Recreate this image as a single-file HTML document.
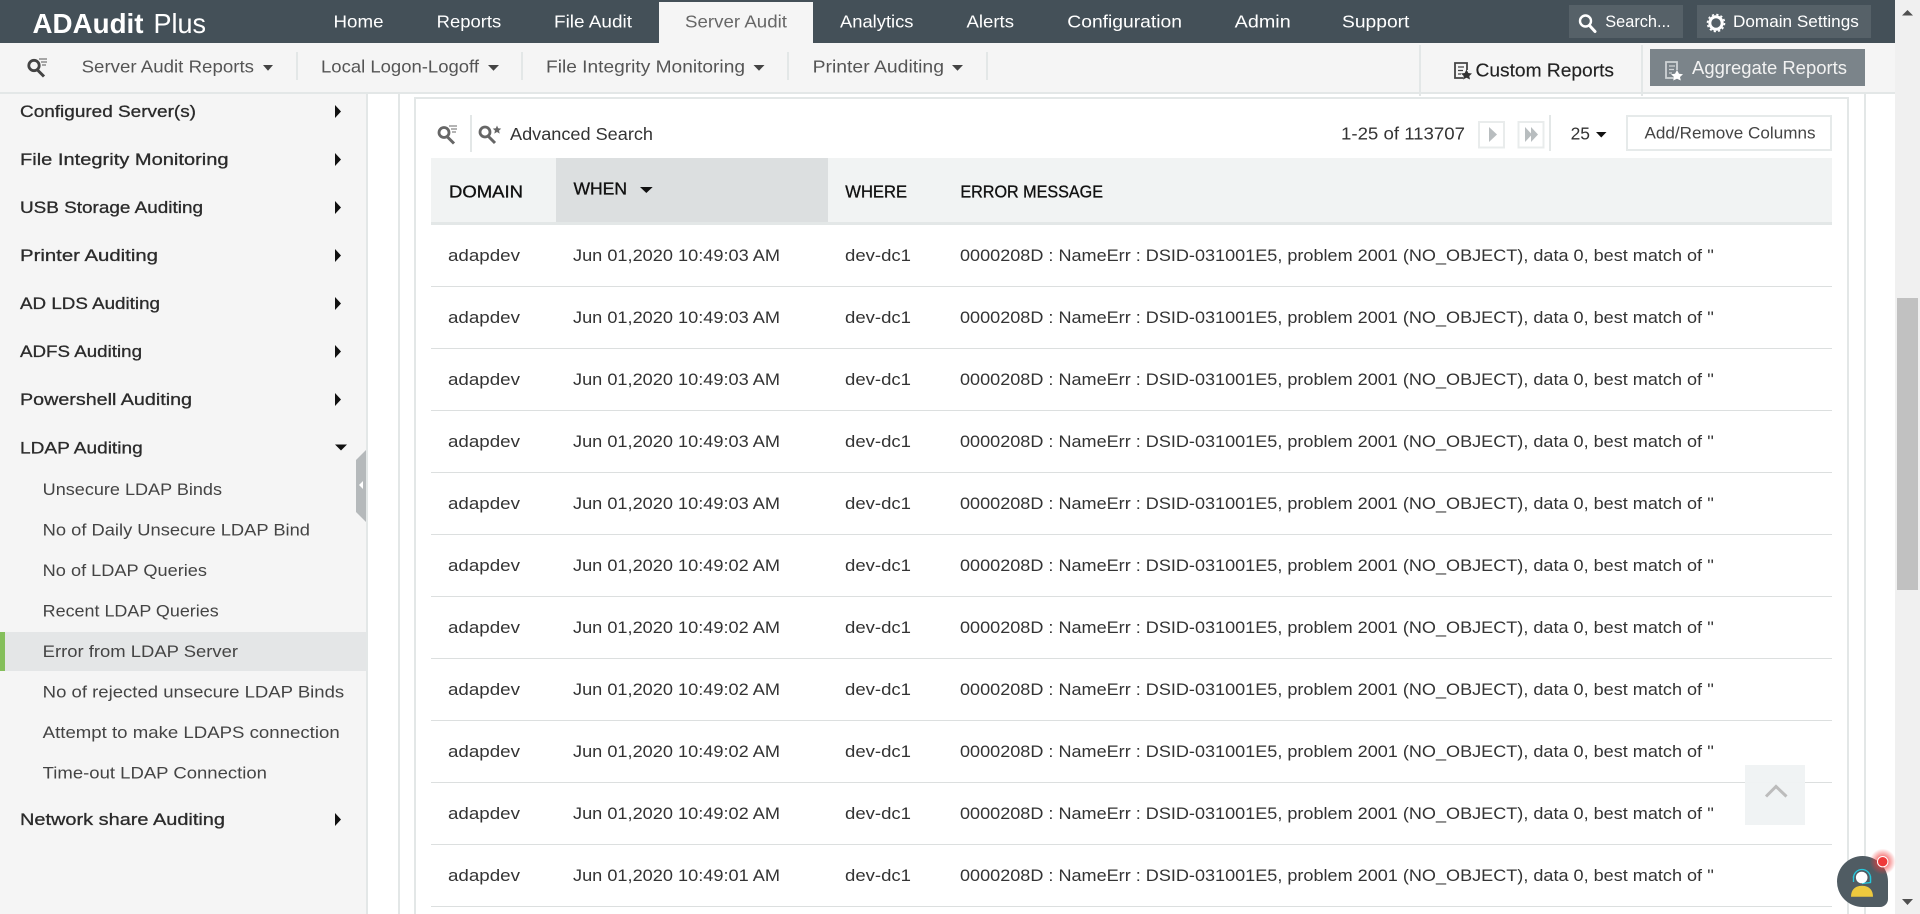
<!DOCTYPE html>
<html lang="en"><head><meta charset="utf-8"><title>ADAudit Plus</title>
<style>
html,body{margin:0;padding:0;background:#fff;overflow:hidden;width:1920px;height:914px}
svg{display:block;font-family:"Liberation Sans",sans-serif}
text{font-size:16px;fill:#333}
.n{fill:#fff;font-size:17.5px}
.s{fill:#555;font-size:17.500px}
.m{fill:#2b2b2b;stroke:#2b2b2b;stroke-width:.3px;font-size:17px}
.u{fill:#444;font-size:17px;transform:translateY(-1px)}
.h{fill:#111;stroke:#111;stroke-width:.35px;font-size:17.500px;transform:translateY(-.5px)}
.d{fill:#333;font-size:17px;transform:translateY(-1px)}
</style></head><body>
<svg width="1920" height="914" viewBox="0 0 1920 914" xmlns="http://www.w3.org/2000/svg">
<rect width="1920" height="914" fill="#fff"/>
<!-- scrollbar -->
<rect x="1895" y="0" width="25" height="914" fill="#f0f0f0"/>
<rect x="1897" y="298" width="21" height="292" fill="#c1c1c1"/>
<path d="M1902 15.500L1907.500 10L1913 15.500Z" fill="#505050"/>
<path d="M1902 899L1907.500 905L1913 899Z" fill="#505050"/>
<!-- header -->
<rect width="1895" height="43" fill="#445058"/>
<text x="32.500" y="33" style="font-size:27.500px;fill:#fff;font-weight:700" textLength="111" lengthAdjust="spacingAndGlyphs">ADAudit</text>
<text x="153.500" y="33" style="font-size:27.500px;fill:#fff" textLength="52.500" lengthAdjust="spacingAndGlyphs">Plus</text>
<text class="n" x="333.500" y="27.500" textLength="50" lengthAdjust="spacingAndGlyphs">Home</text>
<text class="n" x="436.700" y="27.500" textLength="64.500" lengthAdjust="spacingAndGlyphs">Reports</text>
<text class="n" x="554" y="27.500" textLength="78" lengthAdjust="spacingAndGlyphs">File Audit</text>
<rect x="659" y="2" width="154" height="41" fill="#f5f5f5"/>
<text class="n" x="685" y="27.500" textLength="102" lengthAdjust="spacingAndGlyphs" style="fill:#666">Server Audit</text>
<text class="n" x="840" y="27.500" textLength="73.500" lengthAdjust="spacingAndGlyphs">Analytics</text>
<text class="n" x="966.500" y="27.500" textLength="47.500" lengthAdjust="spacingAndGlyphs">Alerts</text>
<text class="n" x="1067.300" y="27.500" textLength="114.700" lengthAdjust="spacingAndGlyphs">Configuration</text>
<text class="n" x="1234.700" y="27.500" textLength="56" lengthAdjust="spacingAndGlyphs">Admin</text>
<text class="n" x="1342" y="27.500" textLength="67.400" lengthAdjust="spacingAndGlyphs">Support</text>
<rect x="1569" y="5" width="114" height="33" fill="#566168"/>
<circle cx="1585.500" cy="21" r="5.500" fill="none" stroke="#fff" stroke-width="2.400"/>
<path d="M1589.500 25.500L1595 31.500" stroke="#fff" stroke-width="3" stroke-linecap="round"/>
<text x="1605.300" y="27" style="font-size:16.500px;fill:#fff" textLength="65.300" lengthAdjust="spacingAndGlyphs">Search...</text>
<rect x="1697" y="5" width="174" height="33" fill="#566168"/>
<circle cx="1716" cy="23" r="6.200" fill="none" stroke="#fff" stroke-width="3"/>
<circle cx="1716" cy="23" r="8.500" fill="none" stroke="#fff" stroke-width="1.600" stroke-dasharray="2.200 2.250"/>
<text x="1733" y="27" style="font-size:16.500px;fill:#fff" textLength="125.800" lengthAdjust="spacingAndGlyphs">Domain Settings</text>
<!-- sub bar -->
<rect y="43" width="1895" height="49" fill="#f5f5f5"/>
<rect y="92" width="1895" height="2" fill="#e3e7e7"/>
<circle cx="34" cy="65.500" r="5.200" fill="none" stroke="#444" stroke-width="2.800"/>
<path d="M37.500 70L44 76.500" stroke="#444" stroke-width="3"/>
<path d="M39 59H47M41 62H47M42 65H46" stroke="#777" stroke-width="1.200"/>
<text class="s" x="81.600" y="72.500" textLength="172.400" lengthAdjust="spacingAndGlyphs">Server Audit Reports</text>
<path d="M263 65H273L268 70.700Z" fill="#444"/>
<rect x="296" y="52" width="2" height="28" fill="#e3e7e7"/>
<text class="s" x="321" y="72.500" textLength="158" lengthAdjust="spacingAndGlyphs">Local Logon-Logoff</text>
<path d="M488 65H499L493.500 70.700Z" fill="#444"/>
<rect x="521" y="52" width="2" height="28" fill="#e3e7e7"/>
<text class="s" x="546" y="72.500" textLength="199" lengthAdjust="spacingAndGlyphs">File Integrity Monitoring</text>
<path d="M753.500 65H764.500L759 70.700Z" fill="#444"/>
<rect x="787" y="52" width="2" height="28" fill="#e3e7e7"/>
<text class="s" x="812.600" y="72.500" textLength="131.400" lengthAdjust="spacingAndGlyphs">Printer Auditing</text>
<path d="M952 65H963L957.500 70.700Z" fill="#444"/>
<rect x="986" y="52" width="2" height="28" fill="#e3e7e7"/>
<rect x="1419" y="45" width="2" height="51" fill="#e3e7e7"/>
<rect x="1641" y="45" width="2" height="51" fill="#e3e7e7"/>
<path d="M1463 78H1455V63H1467V70" fill="none" stroke="#444" stroke-width="1.800"/>
<path d="M1458 67H1464M1458 70.500H1463M1458 74H1461" stroke="#444" stroke-width="1.300"/>
<path d="M1466.500 69.500L1468.300 73L1472 73.500L1469.300 76L1470 79.500L1466.500 77.800L1463 79.500L1463.700 76L1461 73.500L1464.700 73Z" fill="#333"/>
<text x="1475.500" y="76.500" style="font-size:18px;fill:#222;stroke:#222;stroke-width:.15px" textLength="138.500" lengthAdjust="spacingAndGlyphs">Custom Reports</text>
<rect x="1650" y="49" width="215" height="37" fill="#7b848a"/>
<path d="M1674 78H1666V62H1677V70" fill="none" stroke="#cfd3d5" stroke-width="1.800"/>
<path d="M1669 66H1675M1669 69.500H1674M1669 73H1672" stroke="#cfd3d5" stroke-width="1.300"/>
<path d="M1677 70L1679 73.700L1683 74.300L1680 77L1680.800 80.500L1677 78.700L1673.200 80.500L1674 77L1671 74.300L1675 73.700Z" fill="#fff"/>
<text x="1692" y="74" style="font-size:18.500px;fill:#f2f2f2" textLength="155" lengthAdjust="spacingAndGlyphs">Aggregate Reports</text>
<!-- sidebar -->
<rect y="94" width="366" height="820" fill="#f5f5f5"/>
<rect x="366" y="94" width="2" height="820" fill="#e3e7e7"/>
<rect x="398" y="94" width="2" height="820" fill="#e3e7e7"/>
<text class="m" x="20" y="117" textLength="176" lengthAdjust="spacingAndGlyphs">Configured Server(s)</text>
<text class="m" x="20" y="165" textLength="208.600" lengthAdjust="spacingAndGlyphs">File Integrity Monitoring</text>
<text class="m" x="20" y="213" textLength="183" lengthAdjust="spacingAndGlyphs">USB Storage Auditing</text>
<text class="m" x="20" y="261" textLength="138" lengthAdjust="spacingAndGlyphs">Printer Auditing</text>
<text class="m" x="20" y="309" textLength="140" lengthAdjust="spacingAndGlyphs">AD LDS Auditing</text>
<text class="m" x="20" y="357" textLength="122" lengthAdjust="spacingAndGlyphs">ADFS Auditing</text>
<text class="m" x="20" y="405" textLength="172" lengthAdjust="spacingAndGlyphs">Powershell Auditing</text>
<text class="m" x="20" y="453.500" textLength="122.700" lengthAdjust="spacingAndGlyphs">LDAP Auditing</text>
<text class="m" x="20" y="825" textLength="205" lengthAdjust="spacingAndGlyphs">Network share Auditing</text>
<path d="M335 105L341 111.500L335 118Z M335 153L341 159.500L335 166Z M335 201L341 207.500L335 214Z M335 249L341 255.500L335 262Z M335 297L341 303.500L335 310Z M335 345L341 351.500L335 358Z M335 393L341 399.500L335 406Z M335 813L341 819.500L335 826Z" fill="#111"/>
<path d="M335 444.500H347L341 450.500Z" fill="#111"/>
<rect y="632" width="366" height="39" fill="#e4e6e7"/>
<rect y="632" width="5" height="39" fill="#85bf5b"/>
<text class="u" x="42.700" y="496" textLength="179.300" lengthAdjust="spacingAndGlyphs">Unsecure LDAP Binds</text>
<text class="u" x="42.700" y="536.500" textLength="267.300" lengthAdjust="spacingAndGlyphs">No of Daily Unsecure LDAP Bind</text>
<text class="u" x="42.700" y="577" textLength="164.300" lengthAdjust="spacingAndGlyphs">No of LDAP Queries</text>
<text class="u" x="42.700" y="617.500" textLength="176" lengthAdjust="spacingAndGlyphs">Recent LDAP Queries</text>
<text class="u" x="42.700" y="658" textLength="195.300" lengthAdjust="spacingAndGlyphs">Error from LDAP Server</text>
<text class="u" x="42.700" y="698.500" textLength="301.500" lengthAdjust="spacingAndGlyphs">No of rejected unsecure LDAP Binds</text>
<text class="u" x="42.700" y="739" textLength="297" lengthAdjust="spacingAndGlyphs">Attempt to make LDAPS connection</text>
<text class="u" x="42.700" y="779.500" textLength="224.300" lengthAdjust="spacingAndGlyphs">Time-out LDAP Connection</text>
<path d="M366 450V522L356 512V460Z" fill="#b5b9bb"/>
<path d="M359 485L363 481V489Z" fill="#fff"/>
<!-- panel -->
<rect x="414" y="97" width="1435" height="2" fill="#e3e7e7"/>
<rect x="414" y="97" width="2" height="817" fill="#e3e7e7"/>
<rect x="1847" y="97" width="2" height="817" fill="#e3e7e7"/>
<rect x="1864" y="94" width="2" height="820" fill="#e3e7e7"/>
<!-- toolbar -->
<circle cx="444" cy="132.500" r="5" fill="none" stroke="#666" stroke-width="2.800"/>
<path d="M447.500 137L454 143.500" stroke="#666" stroke-width="3"/>
<path d="M449 126H457M451 129H457M452 132H456" stroke="#888" stroke-width="1.200"/>
<rect x="470" y="115" width="2" height="37" fill="#e3e7e7"/>
<circle cx="485" cy="132" r="5" fill="none" stroke="#666" stroke-width="2.800"/>
<path d="M488.500 136.500L495 143" stroke="#666" stroke-width="3"/>
<path d="M497 125.500L498.200 128.300L501.200 128.600L499 130.600L499.700 133.600L497 132L494.300 133.600L495 130.600L492.800 128.600L495.800 128.300Z" fill="#666"/>
<text x="510" y="140" style="fill:#333;font-size:17.500px" textLength="143" lengthAdjust="spacingAndGlyphs">Advanced Search</text>
<text x="1341" y="139.500" style="fill:#333;font-size:17.500px" textLength="124" lengthAdjust="spacingAndGlyphs">1-25 of 113707</text>
<rect x="1479" y="122" width="25" height="25.500" fill="#fff" stroke="#e9ecec" stroke-width="2"/>
<path d="M1489 127L1497 134.500L1489 142Z" fill="#b8bdbf"/>
<rect x="1518.500" y="122" width="25" height="25.500" fill="#fff" stroke="#e9ecec" stroke-width="2"/>
<path d="M1525 127L1532 134.500L1525 142Z M1531 127L1538 134.500L1531 142Z" fill="#b8bdbf"/>
<rect x="1549" y="115" width="2" height="36" fill="#e3e7e7"/>
<text x="1570.600" y="139.500" style="fill:#333;font-size:17.500px" textLength="19.400" lengthAdjust="spacingAndGlyphs">25</text>
<path d="M1596 132H1606.500L1601.250 137.500Z" fill="#111"/>
<rect x="1627" y="116" width="204" height="34" fill="#fff" stroke="#e6eaea" stroke-width="2"/>
<text x="1644.500" y="138.500" style="fill:#444;font-size:16.500px" textLength="171" lengthAdjust="spacingAndGlyphs">Add/Remove Columns</text>
<!-- table header -->
<rect x="431" y="158" width="1401" height="64" fill="#f1f3f3"/>
<rect x="556" y="158" width="272" height="64" fill="#dcdfe0"/>
<rect x="431" y="222" width="1401" height="3" fill="#e3e7e7"/>
<text class="h" x="449" y="198" textLength="74" lengthAdjust="spacingAndGlyphs">DOMAIN</text>
<text class="h" x="573.500" y="195" textLength="53.500" lengthAdjust="spacingAndGlyphs">WHEN</text>
<path d="M640 187H652.700L646.350 193Z" fill="#111"/>
<text class="h" x="845.300" y="198" textLength="61.700" lengthAdjust="spacingAndGlyphs">WHERE</text>
<text class="h" x="960.400" y="198" textLength="142.600" lengthAdjust="spacingAndGlyphs">ERROR MESSAGE</text>
<!-- lines -->
<path d="M431 286.500H1832M431 348.500H1832M431 410.500H1832M431 472.500H1832M431 534.500H1832M431 596.500H1832M431 658.500H1832M431 720.500H1832M431 782.500H1832M431 844.500H1832M431 906.500H1832" stroke="#dcdfdf" stroke-width="1"/>
<!-- rows -->
<text class="d" x="448" y="262" textLength="72" lengthAdjust="spacingAndGlyphs">adapdev</text><text class="d" x="573" y="262" textLength="207" lengthAdjust="spacingAndGlyphs">Jun 01,2020 10:49:03 AM</text><text class="d" x="845" y="262" textLength="66" lengthAdjust="spacingAndGlyphs">dev-dc1</text><text class="d" x="960" y="262" textLength="754" lengthAdjust="spacingAndGlyphs">0000208D : NameErr : DSID-031001E5, problem 2001 (NO_OBJECT), data 0, best match of ''</text>
<text class="d" x="448" y="324" textLength="72" lengthAdjust="spacingAndGlyphs">adapdev</text><text class="d" x="573" y="324" textLength="207" lengthAdjust="spacingAndGlyphs">Jun 01,2020 10:49:03 AM</text><text class="d" x="845" y="324" textLength="66" lengthAdjust="spacingAndGlyphs">dev-dc1</text><text class="d" x="960" y="324" textLength="754" lengthAdjust="spacingAndGlyphs">0000208D : NameErr : DSID-031001E5, problem 2001 (NO_OBJECT), data 0, best match of ''</text>
<text class="d" x="448" y="386" textLength="72" lengthAdjust="spacingAndGlyphs">adapdev</text><text class="d" x="573" y="386" textLength="207" lengthAdjust="spacingAndGlyphs">Jun 01,2020 10:49:03 AM</text><text class="d" x="845" y="386" textLength="66" lengthAdjust="spacingAndGlyphs">dev-dc1</text><text class="d" x="960" y="386" textLength="754" lengthAdjust="spacingAndGlyphs">0000208D : NameErr : DSID-031001E5, problem 2001 (NO_OBJECT), data 0, best match of ''</text>
<text class="d" x="448" y="448" textLength="72" lengthAdjust="spacingAndGlyphs">adapdev</text><text class="d" x="573" y="448" textLength="207" lengthAdjust="spacingAndGlyphs">Jun 01,2020 10:49:03 AM</text><text class="d" x="845" y="448" textLength="66" lengthAdjust="spacingAndGlyphs">dev-dc1</text><text class="d" x="960" y="448" textLength="754" lengthAdjust="spacingAndGlyphs">0000208D : NameErr : DSID-031001E5, problem 2001 (NO_OBJECT), data 0, best match of ''</text>
<text class="d" x="448" y="510" textLength="72" lengthAdjust="spacingAndGlyphs">adapdev</text><text class="d" x="573" y="510" textLength="207" lengthAdjust="spacingAndGlyphs">Jun 01,2020 10:49:03 AM</text><text class="d" x="845" y="510" textLength="66" lengthAdjust="spacingAndGlyphs">dev-dc1</text><text class="d" x="960" y="510" textLength="754" lengthAdjust="spacingAndGlyphs">0000208D : NameErr : DSID-031001E5, problem 2001 (NO_OBJECT), data 0, best match of ''</text>
<text class="d" x="448" y="572" textLength="72" lengthAdjust="spacingAndGlyphs">adapdev</text><text class="d" x="573" y="572" textLength="207" lengthAdjust="spacingAndGlyphs">Jun 01,2020 10:49:02 AM</text><text class="d" x="845" y="572" textLength="66" lengthAdjust="spacingAndGlyphs">dev-dc1</text><text class="d" x="960" y="572" textLength="754" lengthAdjust="spacingAndGlyphs">0000208D : NameErr : DSID-031001E5, problem 2001 (NO_OBJECT), data 0, best match of ''</text>
<text class="d" x="448" y="634" textLength="72" lengthAdjust="spacingAndGlyphs">adapdev</text><text class="d" x="573" y="634" textLength="207" lengthAdjust="spacingAndGlyphs">Jun 01,2020 10:49:02 AM</text><text class="d" x="845" y="634" textLength="66" lengthAdjust="spacingAndGlyphs">dev-dc1</text><text class="d" x="960" y="634" textLength="754" lengthAdjust="spacingAndGlyphs">0000208D : NameErr : DSID-031001E5, problem 2001 (NO_OBJECT), data 0, best match of ''</text>
<text class="d" x="448" y="696" textLength="72" lengthAdjust="spacingAndGlyphs">adapdev</text><text class="d" x="573" y="696" textLength="207" lengthAdjust="spacingAndGlyphs">Jun 01,2020 10:49:02 AM</text><text class="d" x="845" y="696" textLength="66" lengthAdjust="spacingAndGlyphs">dev-dc1</text><text class="d" x="960" y="696" textLength="754" lengthAdjust="spacingAndGlyphs">0000208D : NameErr : DSID-031001E5, problem 2001 (NO_OBJECT), data 0, best match of ''</text>
<text class="d" x="448" y="758" textLength="72" lengthAdjust="spacingAndGlyphs">adapdev</text><text class="d" x="573" y="758" textLength="207" lengthAdjust="spacingAndGlyphs">Jun 01,2020 10:49:02 AM</text><text class="d" x="845" y="758" textLength="66" lengthAdjust="spacingAndGlyphs">dev-dc1</text><text class="d" x="960" y="758" textLength="754" lengthAdjust="spacingAndGlyphs">0000208D : NameErr : DSID-031001E5, problem 2001 (NO_OBJECT), data 0, best match of ''</text>
<text class="d" x="448" y="820" textLength="72" lengthAdjust="spacingAndGlyphs">adapdev</text><text class="d" x="573" y="820" textLength="207" lengthAdjust="spacingAndGlyphs">Jun 01,2020 10:49:02 AM</text><text class="d" x="845" y="820" textLength="66" lengthAdjust="spacingAndGlyphs">dev-dc1</text><text class="d" x="960" y="820" textLength="754" lengthAdjust="spacingAndGlyphs">0000208D : NameErr : DSID-031001E5, problem 2001 (NO_OBJECT), data 0, best match of ''</text>
<text class="d" x="448" y="882" textLength="72" lengthAdjust="spacingAndGlyphs">adapdev</text><text class="d" x="573" y="882" textLength="207" lengthAdjust="spacingAndGlyphs">Jun 01,2020 10:49:01 AM</text><text class="d" x="845" y="882" textLength="66" lengthAdjust="spacingAndGlyphs">dev-dc1</text><text class="d" x="960" y="882" textLength="754" lengthAdjust="spacingAndGlyphs">0000208D : NameErr : DSID-031001E5, problem 2001 (NO_OBJECT), data 0, best match of ''</text>
<!-- scroll to top -->
<rect x="1745" y="765" width="60" height="60" fill="#eff2f3" fill-opacity=".95"/>
<path d="M1766 796.500L1776 786.500L1786.500 796.500" fill="none" stroke="#bcbcbc" stroke-width="3"/>
<!-- chat widget -->
<defs><radialGradient id="g"><stop offset=".45" stop-color="#f03a3a" stop-opacity=".6"/><stop offset="1" stop-color="#f03a3a" stop-opacity="0"/></radialGradient></defs>
<path d="M1862.500 856A25.500 25.500 0 0 1 1888 881.500V899A8 8 0 0 1 1880 907H1862.500A25.500 25.500 0 0 1 1862.500 856Z" fill="#505c63"/>
<circle cx="1882.700" cy="861.700" r="13" fill="url(#g)"/>
<circle cx="1882.700" cy="861.700" r="5.200" fill="#ee3a3a" stroke="#fff" stroke-width="1"/>
<path d="M1853.500 878A8.500 8.500 0 0 1 1870.500 878V882" fill="none" stroke="#25c8dc" stroke-width="1.300"/>
<path d="M1853.500 876V882M1870.500 876V882.500L1862 883.500" fill="none" stroke="#25c8dc" stroke-width="1.300"/>
<circle cx="1861.700" cy="877.500" r="5.800" fill="#fff"/>
<path d="M1851 896.700C1851 889 1856 885.700 1862 885.700C1868 885.700 1873 889 1873 896.700Z" fill="#edc93e"/>
</svg>
</body></html>
